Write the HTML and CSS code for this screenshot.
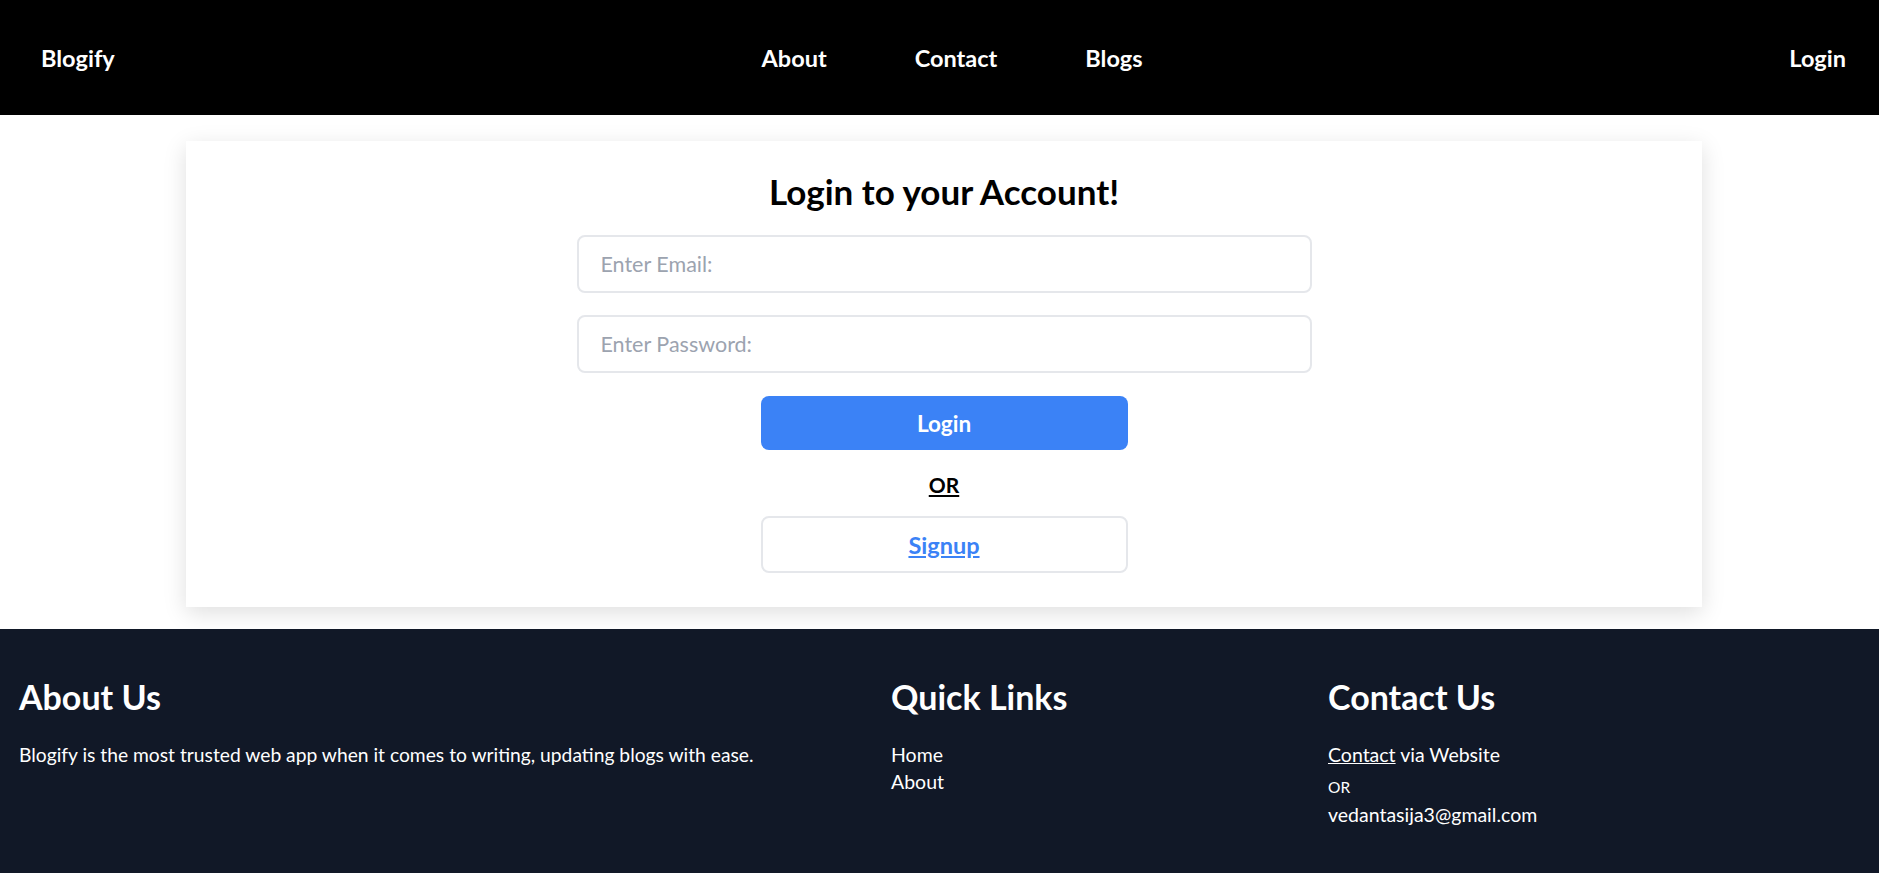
FILE: index.html
```html
<!DOCTYPE html>
<html lang="en">
<head>
<meta charset="utf-8">
<title>Blogify - Login</title>
<link rel="stylesheet" href="styles.css">
</head>
<body>
<nav class="nav">
  <a class="brand" href="#">Blogify</a>
  <div class="nav-links">
    <a href="#">About</a>
    <a href="#">Contact</a>
    <a href="#">Blogs</a>
  </div>
  <a class="nav-login" href="#">Login</a>
</nav>

<main class="main">
  <section class="card">
    <h1 class="title">Login to your Account!</h1>
    <form class="form">
      <input class="field" type="email" placeholder="Enter Email:">
      <input class="field" type="password" placeholder="Enter Password:">
      <button class="btn-login" type="button">Login</button>
      <p class="or">OR</p>
      <a class="btn-signup" href="#"><span>Signup</span></a>
    </form>
  </section>
</main>

<footer class="footer">
  <div class="col">
    <h2 class="f-title">About Us</h2>
    <p class="f-text f-about">Blogify is the most trusted web app when it comes to writing, updating blogs with ease.</p>
  </div>
  <div class="col">
    <h2 class="f-title">Quick Links</h2>
    <ul class="f-list">
      <li><a href="#">Home</a></li>
      <li><a href="#">About</a></li>
    </ul>
  </div>
  <div class="col">
    <h2 class="f-title">Contact Us</h2>
    <p class="f-text"><a class="u" href="#">Contact</a> via Website</p>
    <p class="f-or">OR</p>
    <p class="f-text">vedantasija3@gmail.com</p>
  </div>
</footer>
</body>
</html>
```

FILE: styles.css
```css
* { box-sizing: border-box; }
html, body { margin: 0; padding: 0; }
body {
  font-family: "Lato", "Open Sans", "Liberation Sans", sans-serif;
  background: #ffffff;
  color: #000;
}
a { color: inherit; text-decoration: none; }

.nav {
  height: 115px;
  background: #000;
  color: #fff;
  display: flex;
  align-items: center;
  justify-content: space-between;
  padding: 0 33px 0 41px;
  font-weight: 700;
  font-size: 23.5px;
}
.nav-links {
  display: flex;
  gap: 88px;
}

.main {
  padding: 26px 0 22px;
}
.card {
  width: 1516px;
  margin-left: 186px;
  background: #fff;
  box-shadow: 0 6px 22px rgba(0, 0, 0, 0.13);
  padding: 30px 0 34px;
  display: flex;
  flex-direction: column;
  align-items: center;
}
.title {
  margin: 0 0 24px;
  font-size: 35px;
  line-height: 40px;
  font-weight: 700;
}
.form {
  display: flex;
  flex-direction: column;
  align-items: center;
  width: 735px;
}
.field {
  width: 735px;
  height: 58px;
  border: 2px solid #e5e7eb;
  border-radius: 8px;
  padding: 0 22px;
  font-family: inherit;
  font-size: 21.5px;
  color: #111;
  margin-bottom: 22px;
  outline: none;
}
.field:last-of-type { margin-bottom: 23px; }
.field::placeholder { color: #9ca3af; }
.btn-login {
  width: 367px;
  height: 54px;
  border: none;
  border-radius: 8px;
  background: #3b82f6;
  color: #fff;
  font-family: inherit;
  font-weight: 700;
  font-size: 22.5px;
}
.or {
  margin: 0;
  height: 66px;
  padding-top: 2px;
  display: flex;
  align-items: center;
  font-weight: 700;
  font-size: 21px;
  text-decoration: underline;
}
.btn-signup {
  width: 367px;
  height: 57px;
  border: 2px solid #e5e7eb;
  border-radius: 8px;
  display: flex;
  align-items: center;
  justify-content: center;
  color: #3b82f6;
  font-weight: 700;
  font-size: 23.5px;
  text-decoration: underline;
}

.footer {
  background: #111827;
  color: #fff;
  display: grid;
  grid-template-columns: 872px 437px 1fr;
  padding: 46px 19px 54px;
  min-height: 244px;
}
.f-title {
  margin: 0 0 22px;
  font-size: 34px;
  line-height: 44px;
  font-weight: 700;
}
.f-text {
  margin: 0;
  font-size: 19.5px;
  line-height: 28px;
}
.f-about { font-size: 19.25px; }
.f-list {
  list-style: none;
  margin: 0;
  padding: 0;
  font-size: 19.5px;
  line-height: 27px;
}
.f-or {
  margin: 4px 0 0;
  font-size: 15.5px;
  line-height: 28px;
}
.u { text-decoration: underline; }
```
